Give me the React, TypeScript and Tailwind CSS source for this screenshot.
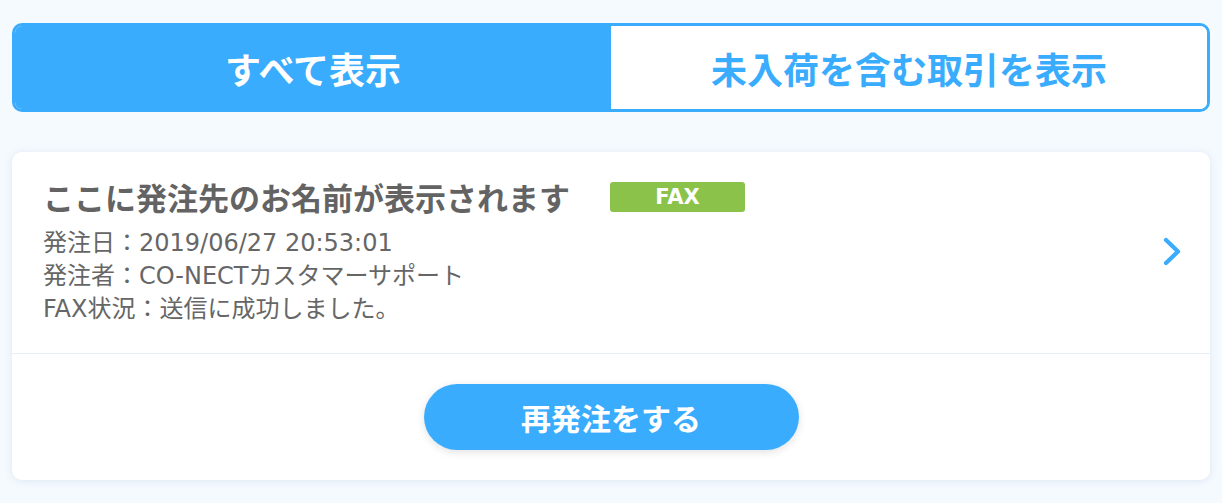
import React, { useState } from "react";

const order = {
  name: "ここに発注先のお名前が表示されます",
  method: "FAX",
  orderedAt: "2019/06/27 20:53:01",
  orderedBy: "CO-NECTカスタマーサポート",
  faxStatus: "送信に成功しました。",
};

function ChevronRight() {
  return (
    <svg width="20" height="31" viewBox="0 0 20 31" fill="none">
      <polyline
        points="4,4 16,15.5 4,27"
        stroke="#3aacfe"
        strokeWidth="4.2"
        strokeLinecap="round"
        strokeLinejoin="round"
      />
    </svg>
  );
}

function App() {
  const [tab, setTab] = useState<"all" | "pending">("all");

  return (
    <div className="min-h-[503px] bg-[#f5faff] px-3 pt-[23px] pb-[23px] font-['Noto_Sans_CJK_JP','Noto_Sans',sans-serif]">
      <div className="flex h-[89px] overflow-hidden rounded-[10px] border-[3px] border-[#3aacfe] bg-white">
        <button
          onClick={() => setTab("all")}
          className={`flex-1 text-[36px] font-bold leading-none ${
            tab === "all" ? "bg-[#3aacfe] text-white" : "bg-white text-[#3aacfe]"
          }`}
        >
          すべて表示
        </button>
        <button
          onClick={() => setTab("pending")}
          className={`flex-1 text-[36px] font-bold leading-none ${
            tab === "pending" ? "bg-[#3aacfe] text-white" : "bg-white text-[#3aacfe]"
          }`}
        >
          未入荷を含む取引を表示
        </button>
      </div>

      <div className="mt-10 rounded-[10px] bg-white shadow-[0_1px_8px_rgba(60,90,130,0.12)]">
        <div className="flex items-center border-b border-[#e8eef5] pl-[31px] pr-[28px] pt-[25px] pb-[27px]">
          <div className="flex-1 text-[#666]">
            <div className="flex h-10 items-center">
              <h2 className="text-[31px] font-bold leading-10 text-[#636363]">{order.name}</h2>
              <span className="ml-[40px] flex h-[30px] w-[135px] items-center justify-center rounded-[3px] bg-[#8bc34a] font-['DejaVu_Sans',sans-serif] text-[21px] font-bold leading-none text-white">
                {order.method}
              </span>
            </div>
            <div className="mt-[10px] font-['DejaVu_Sans','Noto_Sans_CJK_JP',sans-serif] text-[24px] leading-[33px]">
              <p>発注日：{order.orderedAt}</p>
              <p>発注者：{order.orderedBy}</p>
              <p>FAX状況：{order.faxStatus}</p>
            </div>
          </div>
          <ChevronRight />
        </div>
        <div className="flex justify-center py-[30px]">
          <button className="h-[66px] w-[375px] rounded-full bg-[#3aacfe] text-[30px] font-bold text-white shadow-[0_2px_8px_rgba(0,0,0,0.12)]">
            再発注をする
          </button>
        </div>
      </div>
    </div>
  );
}

export default App;
